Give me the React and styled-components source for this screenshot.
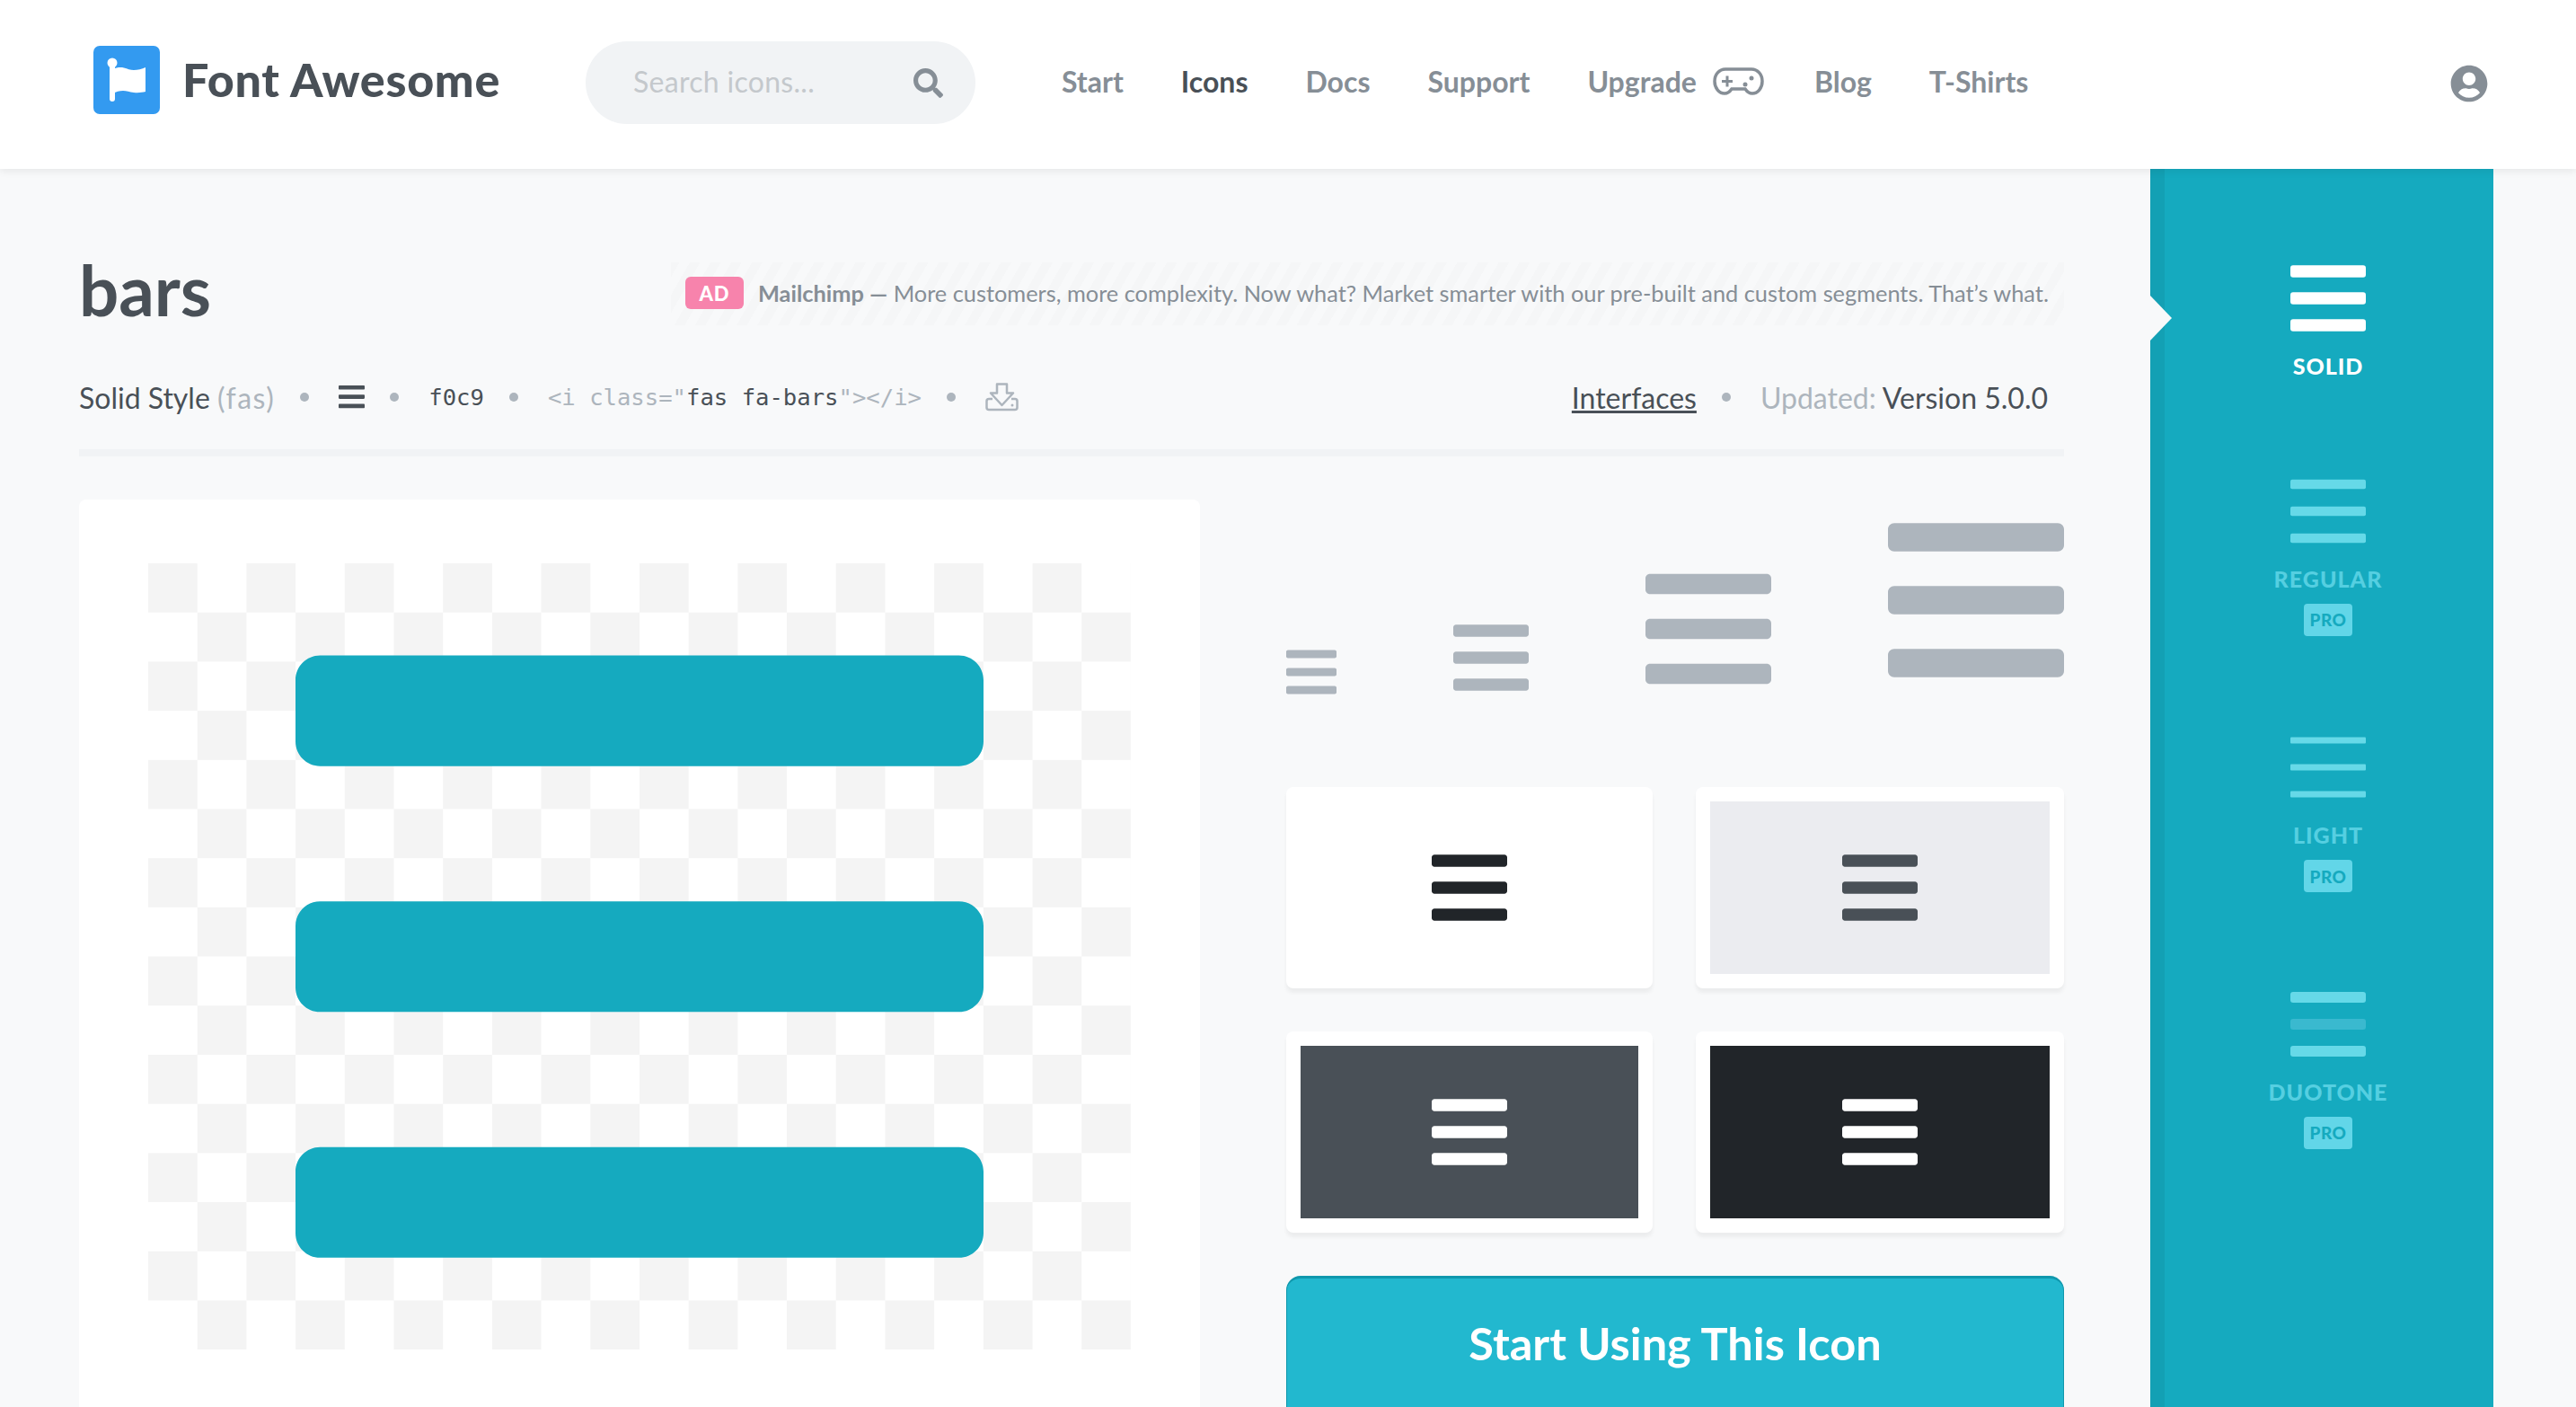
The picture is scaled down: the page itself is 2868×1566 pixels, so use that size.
import React from 'react';
import styled, { createGlobalStyle } from 'styled-components';
import { FaBars, FaSearch, FaUserCircle } from 'react-icons/fa';

const GlobalStyle = createGlobalStyle`
  html, body {
    margin: 0;
    height: 100%;
    overflow: hidden;
    background: #f8f9fa;
    font-family: Lato, "Liberation Sans", sans-serif;
    color: #495057;
  }
`;

const Page = styled.div`
  height: 1566px;
  display: flex;
  flex-direction: column;
  overflow: hidden;
`;

const Header = styled.header`
  position: relative;
  z-index: 2;
  height: 188px;
  flex: none;
  box-sizing: border-box;
  display: flex;
  align-items: center;
  padding: 0 98px 4px 104px;
  background: #fff;
  box-shadow: 0 3px 8px rgba(0, 0, 0, 0.07);
`;

const Brand = styled.div`
  display: flex;
  align-items: center;
  gap: 25px;
  width: 548px;
  font-size: 52px;
  font-weight: 900;
  letter-spacing: 0.7px;
  color: #495057;
  svg {
    margin-bottom: 6px;
  }
  span {
    padding-bottom: 8px;
  }
`;

const Search = styled.div`
  width: 434px;
  height: 92px;
  box-sizing: border-box;
  padding: 0 36px 0 53px;
  display: flex;
  align-items: center;
  justify-content: space-between;
  border-radius: 46px;
  background: #f1f3f5;
  font-size: 32px;
  letter-spacing: 0.3px;
  color: #c4c8cc;
  span {
    padding-bottom: 4px;
  }
  svg {
    width: 33px;
    height: 33px;
    color: #868e96;
  }
`;

const Nav = styled.nav`
  display: flex;
  align-items: center;
  gap: 64px;
  margin-left: 96px;
  flex: 1;
`;

const NavLink = styled.a`
  display: flex;
  align-items: center;
  gap: 18px;
  padding-bottom: 4px;
  margin-right: ${(p) => (p.$tight ? '-8px' : '0')};
  font-size: 32px;
  font-weight: 700;
  color: ${(p) => (p.$active ? '#495057' : '#868e96')};
`;

const UserIcon = styled(FaUserCircle)`
  width: 42px;
  height: 42px;
  margin-top: 2px;
  color: #868e96;
`;

const Body = styled.div`
  flex: 1;
  display: flex;
  padding: 0 92px 0 88px;
`;

const Main = styled.main`
  width: 2210px;
  margin-right: 96px;
  flex: none;
`;

const TitleRow = styled.div`
  display: flex;
  justify-content: space-between;
  align-items: center;
  height: 70px;
  margin-top: 104px;
`;

const Title = styled.h1`
  margin: 0 0 10px;
  font-size: 78px;
  font-weight: 700;
  color: #495057;
`;

const Ad = styled.div`
  width: 1551px;
  height: 70px;
  box-sizing: border-box;
  padding: 0 18px 2px 16px;
  display: flex;
  align-items: center;
  background: repeating-linear-gradient(
    -60deg,
    #f8f9fa 0 10px,
    #f5f6f7 10px 20px
  );
  font-size: 25.35px;
  color: #868e96;
  b {
    font-weight: 700;
  }
`;

const AdBadge = styled.span`
  flex: none;
  width: 65px;
  height: 36px;
  margin-right: 16px;
  display: inline-flex;
  align-items: center;
  justify-content: center;
  border-radius: 6px;
  background: #f783ac;
  color: #fff;
  font-size: 22px;
  font-weight: 900;
  letter-spacing: 1px;
`;

const AdText = styled.span`
  white-space: nowrap;
`;

const MetaRow = styled.div`
  display: flex;
  align-items: center;
  justify-content: space-between;
  height: 60px;
  margin-top: 50px;
  padding-right: 18px;
  font-size: 32px;
  color: #495057;
`;

const MetaGroup = styled.div`
  display: flex;
  align-items: center;
  gap: 28px;
`;

const Muted = styled.span`
  color: #adb5bd;
  letter-spacing: ${(p) => (p.$wide ? '1.5px' : '0')};
`;

const Dot = styled.span`
  width: 10px;
  height: 10px;
  margin-right: 5px;
  border-radius: 50%;
  background: #adb5bd;
`;

const Code = styled.code`
  font-family: "DejaVu Sans Mono", monospace;
  font-size: 25.6px;
  color: #adb5bd;
  b {
    font-weight: 400;
    color: #495057;
  }
`;

const Underlined = styled.a`
  text-decoration: underline;
  color: #495057;
`;

const Divider = styled.div`
  height: 8px;
  margin-top: 28px;
  background: #f1f3f5;
`;

const Columns = styled.div`
  display: flex;
  justify-content: space-between;
  margin-top: 48px;
`;

const Preview = styled.div`
  width: 1248px;
  height: 1100px;
  flex: none;
  box-sizing: border-box;
  padding: 71px 0 0 77px;
  border-radius: 8px;
  background: #fff;
`;

const Checker = styled.div`
  width: 1094px;
  height: 875px;
  display: flex;
  justify-content: center;
  background-image: conic-gradient(#fff 25%, #f4f4f4 0 50%, #fff 0 75%, #f4f4f4 0);
  background-size: 109.4px 109.4px;
`;

const Side = styled.div`
  width: 866px;
  flex: none;
`;

const Sizes = styled.div`
  display: flex;
  justify-content: space-between;
  align-items: flex-end;
  height: 224px;
`;

const Bars = styled(FaBars)`
  display: block;
  flex: none;
  width: ${(p) => p.$w}px;
  height: ${(p) => (p.$w * 512) / 448}px;
  color: ${(p) => p.$color};
`;

const Tiles = styled.div`
  display: grid;
  grid-template-columns: 408px 410px;
  justify-content: space-between;
  row-gap: 48px;
  margin-top: 96px;
`;

const Tile = styled.div`
  height: 224px;
  box-sizing: border-box;
  padding: 16px;
  border-radius: 8px;
  background: #fff;
  box-shadow: 0 5px 4px rgba(0, 0, 0, 0.05);
`;

const TileInner = styled.div`
  height: 192px;
  display: flex;
  align-items: center;
  justify-content: center;
  background: ${(p) => p.$bg};
`;

const CtaButton = styled.a`
  display: block;
  height: 220px;
  margin-top: 48px;
  box-sizing: border-box;
  padding-top: 41px;
  border: 1px solid #1098ad;
  border-top-width: 3px;
  border-radius: 16px;
  background: #22b8cf;
  text-align: center;
  font-size: 50.5px;
  font-weight: 700;
  color: #fff;
`;

const Sidebar = styled.aside`
  position: relative;
  width: 382px;
  flex: none;
  box-sizing: border-box;
  padding: 96px 2px 0 0;
  display: flex;
  flex-direction: column;
  align-items: center;
  gap: 98.5px;
  background: #15aabf;
  border-left: 16px solid #13a0b4;
`;

const Notch = styled.span`
  position: absolute;
  left: -16px;
  top: 141px;
  width: 0;
  height: 0;
  border-left: 24px solid #f8f9fa;
  border-top: 25px solid transparent;
  border-bottom: 25px solid transparent;
`;

const StyleItem = styled.div`
  display: flex;
  flex-direction: column;
  align-items: center;
  svg {
    display: block;
  }
`;

const StyleLabel = styled.div`
  margin-top: 12px;
  font-size: 25px;
  line-height: 30px;
  font-weight: 900;
  letter-spacing: 1px;
  color: ${(p) => (p.$active ? '#fff' : '#55cfe1')};
`;

const ProBadge = styled.div`
  width: 54px;
  height: 36px;
  margin-top: 13px;
  display: flex;
  align-items: center;
  justify-content: center;
  border-radius: 4px;
  background: #62d6e8;
  color: #15aabf;
  font-size: 19px;
  font-weight: 900;
  letter-spacing: 0.5px;
`;

// three bars of the style switcher, heights differ per style
const StyleBars = ({ h, r, fill, middle }) => (
  <svg width="84" height="96" viewBox="0 0 84 96">
    {[18, 48, 78].map((y, i) => (
      <rect
        key={y}
        x="0"
        y={y - h / 2}
        width="84"
        height={h}
        rx={r}
        fill={i === 1 && middle ? middle : fill}
      />
    ))}
  </svg>
);

const LogoFlag = () => (
  <svg width="74" height="76" viewBox="0 0 74 76">
    <rect width="74" height="76" rx="7" fill="#339af0" />
    <circle cx="21" cy="19" r="5.500" fill="#fff" />
    <rect x="18" y="20" width="6" height="42" rx="3" fill="#fff" />
    <path
      fill="#fff"
      d="M22 26c4-2 8-2.500 12-1.500 4 1 7 2.500 11 2.500 4 0 9-1 13-3v27c-4 1-8 1.500-13 1-5-.5-8-2-12-2-4 0-8 1-11 3z"
    />
  </svg>
);

const InboxIn = () => (
  <svg width="37" height="32" viewBox="0 0 37 32" fill="none" stroke="#adb5bd" strokeWidth="2.500" strokeLinejoin="round">
    <path d="M13 1.500h11v10h7L18.500 25 6 11.500h7z" />
    <path d="M8 18H4a2.500 2.500 0 0 0-2.500 2.500v7A2.500 2.500 0 0 0 4 30h29a2.500 2.500 0 0 0 2.500-2.500v-7A2.500 2.500 0 0 0 33 18h-4" />
    <circle cx="30" cy="25" r="1.500" fill="#adb5bd" stroke="none" />
  </svg>
);

const GAME_PAD = (
  <svg width="57" height="31" viewBox="0 0 57 31" fill="none" stroke="#868e96" strokeWidth="3.500">
    <path d="M14 2h29c7 0 12 6 12 13.500S50 29 44 29c-4 0-6-2-8-5H21c-2 3-4 5-8 5C7 29 2 23 2 15.500S7 2 14 2z" />
    <path d="M10 15.500h12M16 9.500v12" strokeWidth="3" />
    <circle cx="36" cy="19" r="2.500" fill="#868e96" stroke="none" />
    <circle cx="43" cy="12" r="2.500" fill="#868e96" stroke="none" />
  </svg>
);

export default function App() {
  return (
    <Page>
      <GlobalStyle />
      <Header>
        <Brand>
          <LogoFlag />
          <span>Font Awesome</span>
        </Brand>
        <Search>
          <span>Search icons...</span>
          <FaSearch />
        </Search>
        <Nav>
          <NavLink>Start</NavLink>
          <NavLink $active>Icons</NavLink>
          <NavLink>Docs</NavLink>
          <NavLink>Support</NavLink>
          <NavLink $tight>Upgrade {GAME_PAD}</NavLink>
          <NavLink>Blog</NavLink>
          <NavLink>T-Shirts</NavLink>
        </Nav>
        <UserIcon />
      </Header>
      <Body>
        <Main>
          <TitleRow>
            <Title>bars</Title>
            <Ad>
              <AdBadge>AD</AdBadge>
              <AdText>
                <b>Mailchimp —</b> More customers, more complexity. Now what? Market smarter with our pre-built and custom segments. That’s what.
              </AdText>
            </Ad>
          </TitleRow>
          <MetaRow>
            <MetaGroup>
              <span>Solid Style <Muted $wide>(fas)</Muted></span>
              <Dot />
              <Bars $w={29} $color="#495057" />
              <Dot />
              <Code><b>f0c9</b></Code>
              <Dot />
              <Code>&lt;i class="<b>fas fa-bars</b>"&gt;&lt;/i&gt;</Code>
              <Dot />
              <InboxIn />
            </MetaGroup>
            <MetaGroup>
              <Underlined>Interfaces</Underlined>
              <Dot />
              <span><Muted>Updated:</Muted> Version 5.0.0</span>
            </MetaGroup>
          </MetaRow>
          <Divider />
          <Columns>
            <Preview>
              <Checker>
                <Bars $w={766} $color="#15aabf" />
              </Checker>
            </Preview>
            <Side>
              <Sizes>
                <Bars $w={56} $color="#adb5bd" />
                <Bars $w={84} $color="#adb5bd" />
                <Bars $w={140} $color="#adb5bd" />
                <Bars $w={196} $color="#adb5bd" />
              </Sizes>
              <Tiles>
                <Tile><TileInner $bg="#fff"><Bars $w={84} $color="#212529" /></TileInner></Tile>
                <Tile><TileInner $bg="#ebecf0"><Bars $w={84} $color="#495057" /></TileInner></Tile>
                <Tile><TileInner $bg="#495057"><Bars $w={84} $color="#fff" /></TileInner></Tile>
                <Tile><TileInner $bg="#212529"><Bars $w={84} $color="#fff" /></TileInner></Tile>
              </Tiles>
              <CtaButton>Start Using This Icon</CtaButton>
            </Side>
          </Columns>
        </Main>
        <Sidebar>
          <Notch />
          <StyleItem>
            <StyleBars h={13.5} r={3} fill="#fff" />
            <StyleLabel $active>SOLID</StyleLabel>
          </StyleItem>
          <StyleItem>
            <StyleBars h={10.5} r={2} fill="#66d9e8" />
            <StyleLabel>REGULAR</StyleLabel>
            <ProBadge>PRO</ProBadge>
          </StyleItem>
          <StyleItem>
            <StyleBars h={7} r={1} fill="#66d9e8" />
            <StyleLabel>LIGHT</StyleLabel>
            <ProBadge>PRO</ProBadge>
          </StyleItem>
          <StyleItem>
            <StyleBars h={12} r={3} fill="#66d9e8" middle="#3ab9cf" />
            <StyleLabel>DUOTONE</StyleLabel>
            <ProBadge>PRO</ProBadge>
          </StyleItem>
        </Sidebar>
      </Body>
    </Page>
  );
}
